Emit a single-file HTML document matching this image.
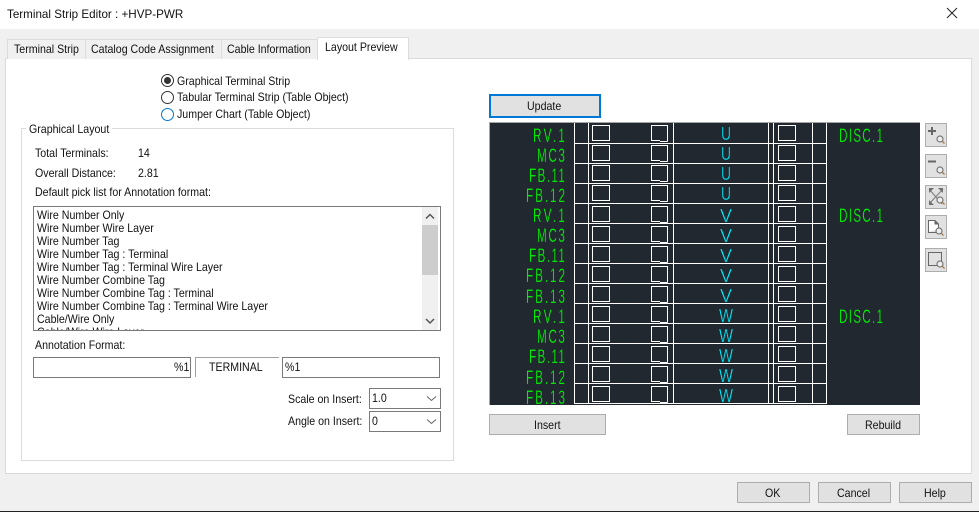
<!DOCTYPE html>
<html><head><meta charset="utf-8"><style>
html,body{margin:0;padding:0}
body{width:979px;height:512px;overflow:hidden;background:#f0f0f0;position:relative;font:12px "Liberation Sans",sans-serif;color:#111}
.a{position:absolute;box-sizing:border-box;white-space:nowrap}
.t{position:absolute;white-space:nowrap;line-height:14px;transform:scaleX(.885);transform-origin:left top}
.b{position:absolute;box-sizing:border-box;background:#e1e1e1;border:1px solid #adadad}
.tab{position:absolute;box-sizing:border-box;top:39px;height:20px;background:#f0f0f0;border:1px solid #dcdcdc;border-bottom:0}
.r{position:absolute;box-sizing:border-box;width:13px;height:13px;border-radius:50%;border:1px solid #333;background:#fff;left:161px}
.i{position:absolute;box-sizing:border-box;background:#fff;border:1px solid #7a7a7a;height:21px}
svg{position:absolute;left:0;top:0}
</style></head><body>
<div class="a" style="left:0;top:0;width:979px;height:29px;background:#fff"></div>
<div class="t" style="left:7px;top:7px;transform:scaleX(.97)">Terminal Strip Editor : +HVP-PWR</div>
<div class="a" style="left:0;top:511px;width:979px;height:1px;background:#222"></div>
<div class="a" style="left:5px;top:58px;width:967px;height:416px;background:#fff;border:1px solid #dadada"></div>
<div class="tab" style="left:7px;width:79px"></div>
<div class="tab" style="left:85px;width:137px"></div>
<div class="tab" style="left:221px;width:97px"></div>
<div class="tab" style="left:317px;top:37px;width:92px;height:23px;background:#fff"></div>
<div class="t" style="left:14px;top:42px">Terminal Strip</div>
<div class="t" style="left:91px;top:42px">Catalog Code Assignment</div>
<div class="t" style="left:227px;top:42px">Cable Information</div>
<div class="t" style="left:325px;top:40px">Layout Preview</div>

<div class="r" style="top:74px"><div class="a" style="left:2px;top:2px;width:7px;height:7px;border-radius:50%;background:#333"></div></div>
<div class="t" style="left:177px;top:74px">Graphical Terminal Strip</div>
<div class="r" style="top:91px"></div>
<div class="t" style="left:177px;top:90px">Tabular Terminal Strip (Table Object)</div>
<div class="r" style="top:108px;border-color:#0078d7"></div>
<div class="t" style="left:177px;top:107px">Jumper Chart (Table Object)</div>

<div class="a" style="left:21px;top:128px;width:433px;height:333px;border:1px solid #dcdcdc"></div>
<div class="a" style="left:26px;top:122px;width:86px;height:14px;background:#fff"></div>
<div class="t" style="left:29px;top:122px">Graphical Layout</div>
<div class="t" style="left:35px;top:146px">Total Terminals:</div>
<div class="t" style="left:138px;top:146px">14</div>
<div class="t" style="left:35px;top:166px">Overall Distance:</div>
<div class="t" style="left:138px;top:166px">2.81</div>
<div class="t" style="left:35px;top:185px">Default pick list for Annotation format:</div>

<div class="a" style="left:33px;top:206px;width:408px;height:125px;border:1px solid #7a7a7a;background:#fff;overflow:hidden">
<div class="t" style="left:3px;top:1px">Wire Number Only</div>
<div class="t" style="left:3px;top:14px">Wire Number Wire Layer</div>
<div class="t" style="left:3px;top:27px">Wire Number Tag</div>
<div class="t" style="left:3px;top:40px">Wire Number Tag : Terminal</div>
<div class="t" style="left:3px;top:53px">Wire Number Tag : Terminal Wire Layer</div>
<div class="t" style="left:3px;top:66px">Wire Number Combine Tag</div>
<div class="t" style="left:3px;top:79px">Wire Number Combine Tag : Terminal</div>
<div class="t" style="left:3px;top:92px">Wire Number Combine Tag : Terminal Wire Layer</div>
<div class="t" style="left:3px;top:105px">Cable/Wire Only</div>
<div class="t" style="left:3px;top:118px">Cable/Wire Wire Layer</div>
<div class="a" style="left:388px;top:0;width:16px;height:123px;background:#f0f0f0"></div>
<div class="a" style="left:388px;top:18px;width:16px;height:50px;background:#cdcdcd"></div>
</div>

<div class="t" style="left:35px;top:338px">Annotation Format:</div>
<div class="i" style="left:33px;top:357px;width:158px"></div>
<div class="t" style="left:174px;top:360px">%1</div>
<div class="a" style="left:195px;top:357px;width:84px;height:20px;border-top:1px solid #a0a0a0;border-left:1px solid #a0a0a0"></div>
<div class="t" style="left:209px;top:360px">TERMINAL</div>
<div class="i" style="left:282px;top:357px;width:158px"></div>
<div class="t" style="left:285px;top:360px">%1</div>
<div class="t" style="left:288px;top:392px">Scale on Insert:</div>
<div class="i" style="left:369px;top:388px;width:72px"></div>
<div class="t" style="left:372px;top:391px">1.0</div>
<div class="t" style="left:288px;top:414px">Angle on Insert:</div>
<div class="i" style="left:369px;top:411px;width:72px"></div>
<div class="t" style="left:372px;top:414px">0</div>

<div class="b" style="left:489px;top:94px;width:112px;height:24px;border:2px solid #0078d7"></div>
<div class="t" style="left:527px;top:99px">Update</div>
<div class="b" style="left:489px;top:414px;width:117px;height:21px"></div>
<div class="t" style="left:534px;top:418px">Insert</div>
<div class="b" style="left:847px;top:414px;width:73px;height:21px"></div>
<div class="t" style="left:865px;top:418px">Rebuild</div>
<div class="b" style="left:737px;top:482px;width:73px;height:21px"></div>
<div class="t" style="left:765px;top:486px">OK</div>
<div class="b" style="left:818px;top:482px;width:73px;height:21px"></div>
<div class="t" style="left:837px;top:486px">Cancel</div>
<div class="b" style="left:899px;top:482px;width:73px;height:21px"></div>
<div class="t" style="left:924px;top:486px">Help</div>

<div class="b" style="left:925px;top:123px;width:22px;height:24px"></div>
<div class="b" style="left:925px;top:154px;width:22px;height:24px"></div>
<div class="b" style="left:925px;top:185px;width:22px;height:24px"></div>
<div class="b" style="left:925px;top:215px;width:22px;height:24px"></div>
<div class="b" style="left:925px;top:248px;width:22px;height:24px"></div>

<svg width="979" height="512" viewBox="0 0 979 512" font-family="Liberation Sans, sans-serif">
<defs>
<g id="bx" fill="none" stroke="#fff">
<rect x="592.500" y="0.500" width="17" height="15"/>
<path d="M667.500 16.500V.500H651.500V15.500H660M660 16.500H667.500"/>
<rect x="778.500" y="0.500" width="17" height="15"/>
</g>
<g id="mag"><circle cx="0" cy="0" r="3" fill="#eee" stroke="#777" stroke-width="1.200"/><path d="M2.200 2.200L4.500 4.500" stroke="#a5784a" stroke-width="1.300"/></g>
</defs>
<path d="M947 8L957 18M957 8L947 18" stroke="#222" stroke-width="1"/>
<path d="M426 218.500l4-4 4 4M426 319l4 4 4-4" fill="none" stroke="#555" stroke-width="1.500"/>
<path d="M427 396.500l4.500 4 4.500-4M427 419.500l4.500 4 4.500-4" fill="none" stroke="#666" stroke-width="1"/>

<rect x="489" y="122" width="431" height="283" fill="#212830"/>
<path d="M489.500 405V122.500H920" fill="none" stroke="#a5a5a5"/>
<path d="M574.500 123V404M588.500 123V404M673.500 123V404M768.500 123V404M773.500 123V404M812.500 123V404M826.500 123V404M574 143.500H827M574 163.500H827M574 183.500H827M574 203.500H827M574 223.500H827M574 243.500H827M574 263.500H827M574 283.500H827M574 303.500H827M574 323.500H827M574 343.500H827M574 363.500H827M574 383.500H827M574 403.500H827" stroke="#fff"/>
<use href="#bx" y="125"/><use href="#bx" y="145"/><use href="#bx" y="165"/><use href="#bx" y="185"/>
<use href="#bx" y="206"/><use href="#bx" y="226"/><use href="#bx" y="246"/><use href="#bx" y="266"/>
<use href="#bx" y="286"/><use href="#bx" y="306"/><use href="#bx" y="326"/><use href="#bx" y="346"/><use href="#bx" y="366"/><use href="#bx" y="386"/>

<g fill="#00ff00" font-size="19" stroke="#212830" stroke-width=".3">
<text transform="translate(533 142) scale(.62 1)" textLength="51.600">RV.1</text>
<text transform="translate(537 162) scale(.62 1)" textLength="45">MC3</text>
<text transform="translate(529 182) scale(.62 1)" textLength="58">FB.11</text>
<text transform="translate(526 202) scale(.62 1)" textLength="63">FB.12</text>
<text transform="translate(533 222) scale(.62 1)" textLength="51.600">RV.1</text>
<text transform="translate(537 242) scale(.62 1)" textLength="45">MC3</text>
<text transform="translate(529 262) scale(.62 1)" textLength="58">FB.11</text>
<text transform="translate(526 282) scale(.62 1)" textLength="63">FB.12</text>
<text transform="translate(526 303) scale(.62 1)" textLength="63">FB.13</text>
<text transform="translate(533 323) scale(.62 1)" textLength="51.600">RV.1</text>
<text transform="translate(537 343) scale(.62 1)" textLength="45">MC3</text>
<text transform="translate(529 363) scale(.62 1)" textLength="58">FB.11</text>
<text transform="translate(526 384) scale(.62 1)" textLength="63">FB.12</text>
<text transform="translate(526 404) scale(.62 1)" textLength="63">FB.13</text>
<text transform="translate(839 142) scale(.62 1)" textLength="71">DISC.1</text>
<text transform="translate(839 222) scale(.62 1)" textLength="71">DISC.1</text>
<text transform="translate(839 323) scale(.62 1)" textLength="71">DISC.1</text>
</g>
<g fill="#00f0ff" font-size="18" stroke="#212830" stroke-width=".35">
<text x="721" y="140" textLength="10" lengthAdjust="spacingAndGlyphs">U</text><text x="721" y="160" textLength="10" lengthAdjust="spacingAndGlyphs">U</text><text x="721" y="180" textLength="10" lengthAdjust="spacingAndGlyphs">U</text><text x="721" y="200" textLength="10" lengthAdjust="spacingAndGlyphs">U</text>
<text x="720" y="222" textLength="12" lengthAdjust="spacingAndGlyphs">V</text><text x="720" y="242" textLength="12" lengthAdjust="spacingAndGlyphs">V</text><text x="720" y="262" textLength="12" lengthAdjust="spacingAndGlyphs">V</text><text x="720" y="282" textLength="12" lengthAdjust="spacingAndGlyphs">V</text><text x="720" y="302" textLength="12" lengthAdjust="spacingAndGlyphs">V</text>
<text x="719" y="322" textLength="14" lengthAdjust="spacingAndGlyphs">W</text><text x="719" y="342" textLength="14" lengthAdjust="spacingAndGlyphs">W</text><text x="719" y="362" textLength="14" lengthAdjust="spacingAndGlyphs">W</text><text x="719" y="382" textLength="14" lengthAdjust="spacingAndGlyphs">W</text><text x="719" y="402" textLength="14" lengthAdjust="spacingAndGlyphs">W</text>
</g>

<path d="M928 131h8M932 127v8M928 161.500h8" stroke="#666" stroke-width="2"/>
<use href="#mag" x="940" y="139"/>
<use href="#mag" x="940" y="170"/>
<path d="M929 189L942 204M943 189L929 204" stroke="#808080" stroke-width="1.100"/>
<path d="M929 188h5l-5 5zM943 188h-5l5 5zM929 205h5l-5-5z" fill="#707070"/>
<use href="#mag" x="940" y="200"/>
<path d="M928.500 232V220.500H935L938.500 224V229" fill="#fff" stroke="#666"/>
<path d="M928 232.500H936" stroke="#666"/>
<path d="M934.500 220.500L938.500 224.500H934.500Z" fill="#666"/>
<use href="#mag" x="939" y="231"/>
<path d="M937 265.500H928.500V252.500H941.500V261" fill="none" stroke="#666"/>
<use href="#mag" x="940" y="264"/>
</svg>
</body></html>
